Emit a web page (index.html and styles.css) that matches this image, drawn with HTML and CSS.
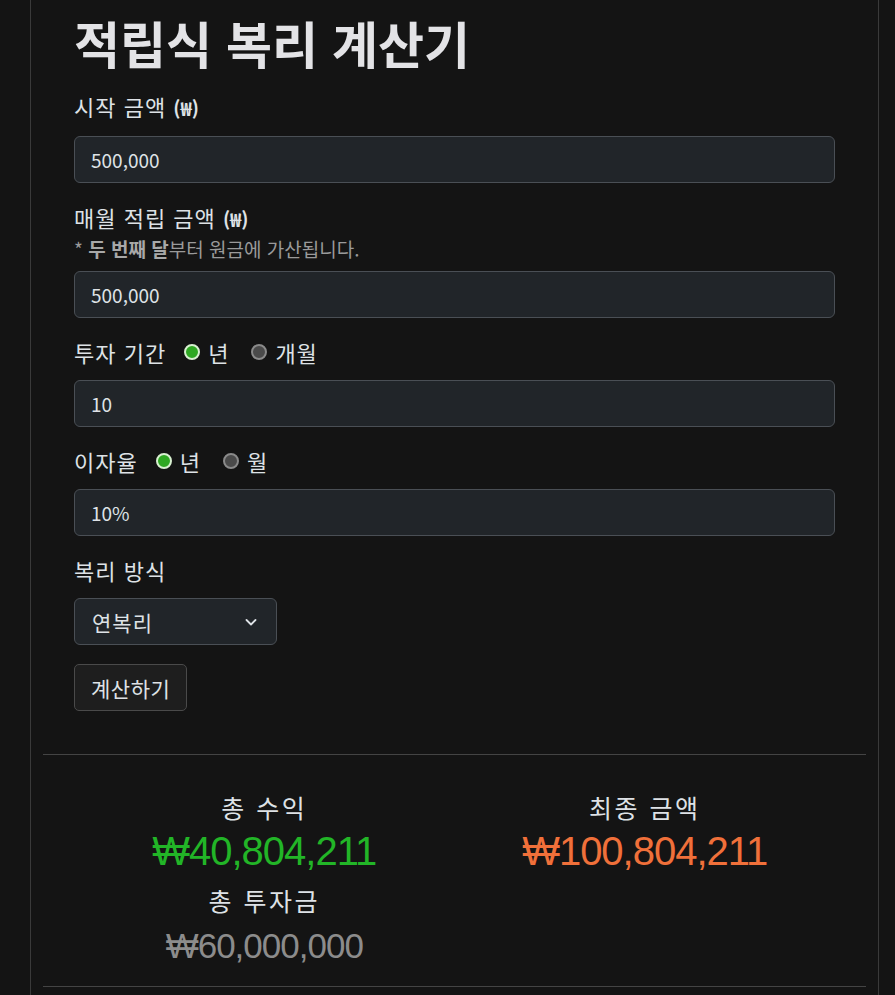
FILE: index.html
```html
<!DOCTYPE html>
<html lang="ko">
<head>
    <meta charset="UTF-8">
    <meta name="viewport" content="width=device-width, initial-scale=1.0">
    <title>적립식 복리 계산기</title>
    <link rel="stylesheet" href="styles.css">
</head>
<body>
    <div class="container">
        <div class="calc-form">
            <h1 class="title">적립식 복리 계산기</h1>

            <div class="field">
                <label class="field-label">시작 금액 <span class="won">(₩)</span></label>
                <input class="text-input" type="text" value="500,000">
            </div>

            <div class="field">
                <label class="field-label">매월 적립 금액 <span class="won">(₩)</span></label>
                <div class="hint">* <b>두 번째 달</b>부터 원금에 가산됩니다.</div>
                <input class="text-input" type="text" value="500,000">
            </div>

            <div class="field">
                <div class="field-label radio-row">
                    <span>투자 기간</span>
                    <label class="radio"><span class="dot checked"></span>년</label>
                    <label class="radio"><span class="dot"></span>개월</label>
                </div>
                <input class="text-input" type="text" value="10">
            </div>

            <div class="field">
                <div class="field-label radio-row">
                    <span>이자율</span>
                    <label class="radio"><span class="dot checked"></span>년</label>
                    <label class="radio"><span class="dot"></span>월</label>
                </div>
                <input class="text-input" type="text" value="10%">
            </div>

            <div class="field">
                <label class="field-label">복리 방식</label>
                <div class="select">
                    <span>연복리</span>
                    <svg width="16" height="16" viewBox="0 0 16 16"><path d="M3.5 6l4.5 4.5L12.5 6" fill="none" stroke="#dee2e6" stroke-width="1.8" stroke-linecap="round" stroke-linejoin="round"/></svg>
                </div>
            </div>

            <button class="calc-btn">계산하기</button>
        </div>

        <hr class="divider">

        <div class="results">
            <div class="result">
                <div class="result-label">총 수익</div>
                <div class="result-value green">₩40,804,211</div>
                <div class="result-label">총 투자금</div>
                <div class="result-value small gray">₩60,000,000</div>
            </div>
            <div class="result">
                <div class="result-label">최종 금액</div>
                <div class="result-value orange">₩100,804,211</div>
            </div>
        </div>

        <hr class="divider">
    </div>
</body>
</html>
```

FILE: styles.css
```css
/* Base */
body {
    margin: 0;
    background-color: #141414;
    color: #dee2e6;
    font-family: 'Noto Sans CJK KR', 'Noto Sans', sans-serif;
}

.container {
    width: 823px;
    margin: 0 0 0 30px;
    padding: 0 12px;
    border-left: 1px solid #3a3a3a;
    border-right: 1px solid #3a3a3a;
    min-height: 995px;
}

.calc-form {
    padding: 0 31px 43px 31px;
}

.title {
    margin: 0;
    padding: 14px 0 2px;
    font-size: 50px;
    font-weight: 700;
    line-height: 56px;
    color: #e3e3e6;
}

/* Fields */
.field {
    margin-top: 18px;
}

.field-label {
    display: block;
    font-size: 22px;
    line-height: 32px;
    letter-spacing: 1px;
    margin-bottom: 12px;
}

.won {
    font-size: 19px;
    font-weight: 700;
    letter-spacing: 0;
}

.hint {
    margin-top: -10px;
    margin-bottom: 10px;
    font-size: 19px;
    line-height: 24px;
    color: #9a9a9a;
}

.hint b {
    font-weight: 700;
    color: #a8a8a8;
}

.text-input {
    display: block;
    box-sizing: border-box;
    width: 100%;
    height: 47px;
    padding: 0 16px;
    background-color: #212529;
    border: 1px solid #4a4f55;
    border-radius: 6px;
    color: #dee2e6;
    font-family: inherit;
    font-size: 19px;
}

/* Radios */
.radio-row {
    display: flex;
    align-items: center;
    gap: 18px;
}

.radio {
    display: flex;
    align-items: center;
    gap: 8px;
    margin-right: 4px;
}

.dot {
    width: 12px;
    height: 12px;
    border-radius: 50%;
    border: 2px solid #8a8a8a;
    background-color: #4a4a4a;
}

.dot.checked {
    border-color: #d8f0d0;
    background-color: #2ea822;
}

/* Select + button */
.select {
    box-sizing: border-box;
    width: 203px;
    height: 47px;
    padding: 0 17px;
    display: flex;
    align-items: center;
    justify-content: space-between;
    background-color: #212529;
    border: 1px solid #4a4f55;
    border-radius: 6px;
    font-size: 21px;
    letter-spacing: 1px;
}

.calc-btn {
    margin-top: 19px;
    height: 47px;
    padding: 0 16px;
    background-color: #1e1e1e;
    border: 1px solid #4a4a4a;
    border-radius: 5px;
    color: #dee2e6;
    font-family: inherit;
    font-size: 21px;
    letter-spacing: 0.5px;
}

.divider {
    margin: 0;
    border: 0;
    border-top: 1px solid #444;
}

/* Results */
.results {
    display: grid;
    grid-template-columns: 1fr 1fr;
    padding: 36px 31px 13px 31px;
}

.result {
    text-align: center;
}

.result-label {
    font-size: 25px;
    line-height: 32px;
    letter-spacing: 2.5px;
}

.result-value {
    font-family: 'Liberation Sans', 'Noto Sans CJK KR', sans-serif;
    font-size: 40px;
    line-height: 50px;
    letter-spacing: -1px;
    margin: 3px 0 8px;
}

.result-value.small {
    font-size: 35px;
    line-height: 54px;
    margin: 3px 0 0;
}

.green { color: #22b527; }
.orange { color: #f0703a; }
.gray { color: #8c8c8c; }
```
